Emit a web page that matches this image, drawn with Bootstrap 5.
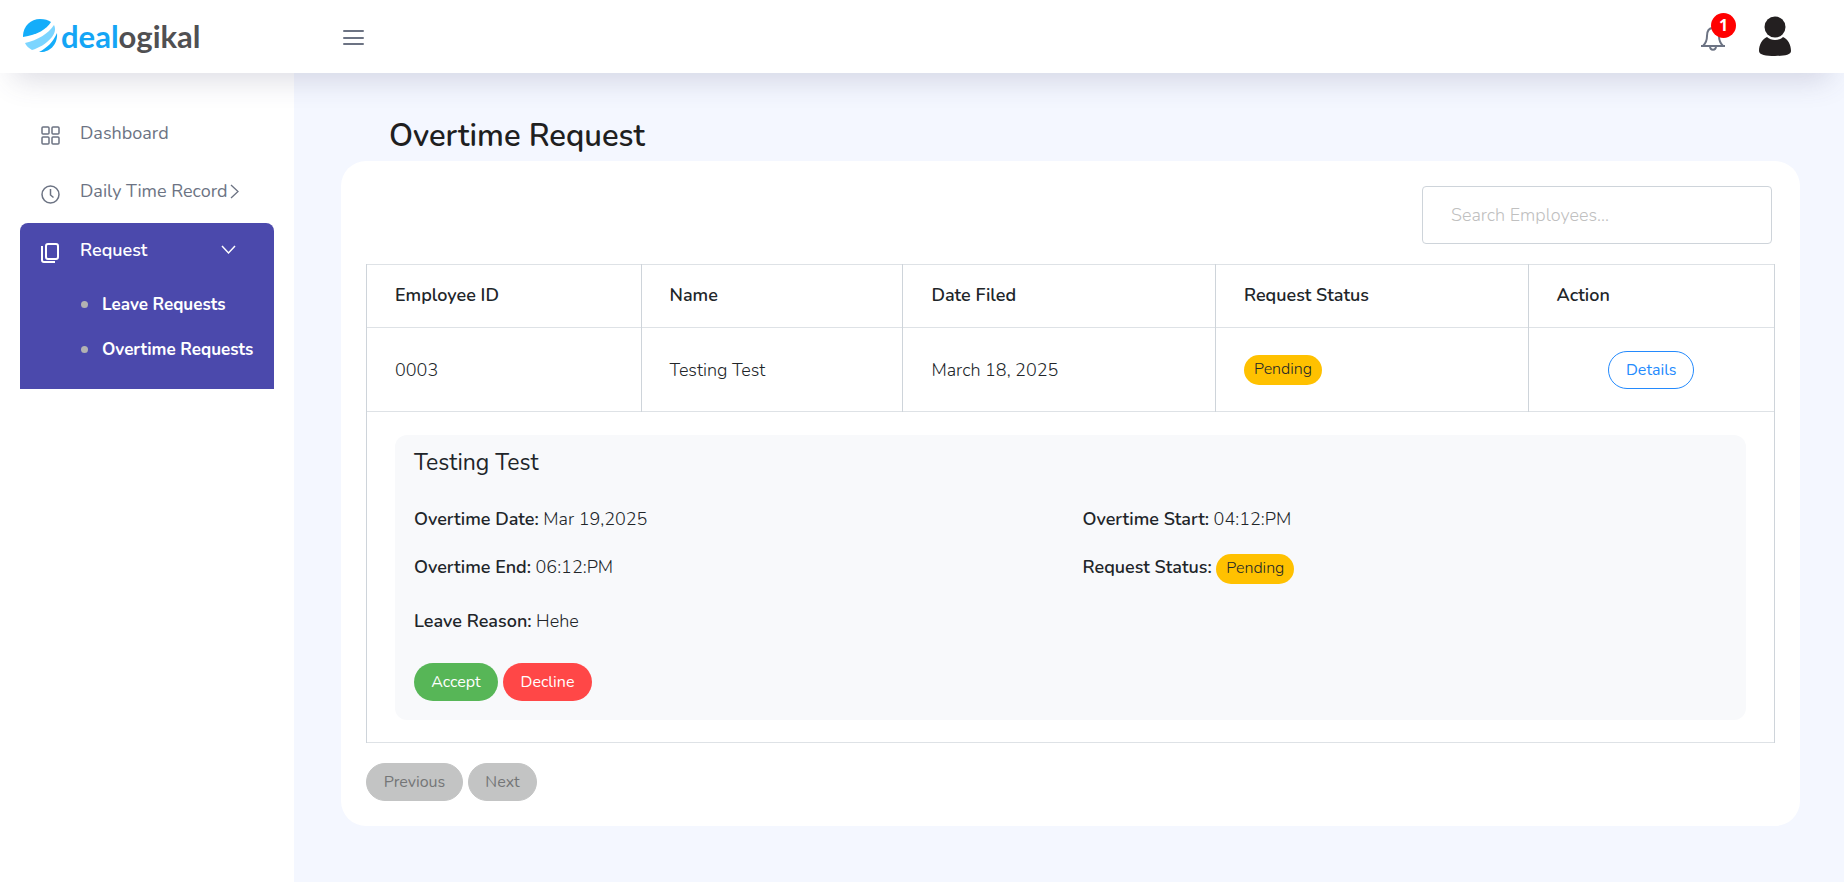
<!DOCTYPE html>
<html lang="en">
<head>
<meta charset="utf-8">
<meta name="viewport" content="width=device-width, initial-scale=1">
<title>Overtime Request</title>
<link href="https://cdn.jsdelivr.net/npm/bootstrap@5.3.0/dist/css/bootstrap.min.css" rel="stylesheet">
<style>
body{font-family:Nunito,Lato,sans-serif;font-size:18px;line-height:24px;font-weight:400;color:#212529;background:#f4f7ff;min-height:100vh}
.topbar{height:73px;box-shadow:0 20px 30px -14px rgba(70,70,110,.2);z-index:5}
.brand-area{width:294px;padding-left:23px}
.brand-word{font:700 31px/36px Lato,sans-serif;color:#505052;margin:0 0 2px 2px}
.brand-word span{color:#14a5f5}
.menu-toggle{margin:2px 0 0 48px}
.notice{width:26px;height:28px}
.notice svg{margin-top:2px}
.notice-count{width:25px;height:25px;left:11px;top:-10px;background:#f00;font:700 16px/25px "Open Sans",sans-serif}
.sidebar{width:294px;padding:31px 20px}
.sidebar a{color:#6c7383}
.side-link{height:58px;padding-left:21px;gap:19px}
.side-link svg{margin-top:6px}
.side-link .caret{margin-top:0}
.time-label{gap:2px}
.request-group{background:#4b49ac;border-radius:8px 8px 0 0;height:166px;margin-top:3px}
.request-group a{color:#fff;font-weight:600}
.request-group .side-link{height:54px}
.request-caret{margin-right:31px}
.sub-links{margin:5px 0 0;padding-left:61px}
.sub-links li{height:45px;gap:14px}
.sub-links li a{font-size:17px;font-weight:700}
.sub-links li::before{content:"";width:7px;height:7px;border-radius:50%;background:#b2b2b2}
.page-body{padding:41px 44px 57px 47px}
.page-heading{font-size:31px;line-height:44px;font-weight:600;color:#1f1f1f;margin:0 0 3px 48px}
.panel{background:#fff;border-radius:25px;padding:25px}
.search-box{width:350px;height:58px;padding:0 28px;border:1px solid #ced4da;border-radius:4px;font-size:18px;font-weight:300;margin:0 3px 20px 0}
.search-box::placeholder{color:#c0c0c0}
.requests{--bs-table-color:#212529;table-layout:fixed;margin-bottom:20px;font-weight:300}
.requests>:not(caption)>*>*{padding:0 28px;background:none;border-color:#ced4da}
.requests thead th{height:63px;padding-bottom:2px;font-weight:600;vertical-align:middle}
.requests .entry td{height:84px}
.requests .detail-cell{padding:23px 28px 22px}
.c-id{width:19.5%}.c-name{width:18.6%}.c-date,.c-status{width:22.2%}
.status-pill{display:inline-block;background:#ffc100;border-radius:15px;font-size:16px;font-weight:300;line-height:29px;height:30px;width:78px;text-align:center;color:#212529}
.detail-box{background:#f8f9fb;border-radius:12px;padding:14px 19px 19px}
.detail-box h2{font-size:23px;line-height:28px;font-weight:400;margin:0 0 27px}
.detail-box p{margin:0;line-height:30px}
.detail-box .row{row-gap:18px;margin-bottom:22px}
.detail-box strong{font-weight:600}
.detail-actions{margin-top:27px;gap:5px}
.pill{height:38px;border-radius:19px;padding:0 16px;font-size:16px;line-height:36px}
.pill-details{color:#248afd;border-color:#248afd;width:86px}
.pill-accept,.pill-accept:hover{background:#57b657;color:#fff;width:84px}
.pill-decline,.pill-decline:hover{background:#ff4747;color:#fff;width:89px}
.pager{gap:5px}
.pill-page:disabled{background:#c3c4c4;color:#747677;opacity:1;border-color:#c3c4c4}
.pill-prev{width:97px}.pill-next{width:69px}
</style>
</head>
<body class="d-flex flex-column">
<header class="topbar bg-white d-flex align-items-center position-relative">
  <a href="#" class="brand-area d-flex align-items-center text-decoration-none" aria-label="dealogikal">
    <svg width="36" height="38" viewBox="0 0 36 38"><path fill="#14adfa" d="M0 18C0 8 8 1 17 1c5 0 8 1 11 3-4 7-14 13-28 15z"/><path fill="#7cd5ff" d="M2 25C15 22 25 16 31 7c2 4 1 8-2 12-6 7-13 11-20 13-3-2-6-4-7-7z"/><path fill="#14adfa" d="M16 34c8-4 14-10 18-19 1 10-6 20-18 19z"/></svg>
    <span class="brand-word"><span>deal</span>ogikal</span>
  </a>
  <button class="menu-toggle btn p-0 border-0 d-flex" aria-label="Toggle menu"><svg width="23" height="18" fill="none" stroke="#6c7383" stroke-width="2" stroke-linecap="round"><path d="M2 2h19M2 9h19M2 15h19"/></svg></button>
  <div class="ms-auto d-flex align-items-center me-5">
    <button class="notice btn p-0 border-0 position-relative me-4" aria-label="Notifications">
      <svg class="d-block" width="26" height="28" viewBox="0 0 26 28" fill="none" stroke="#6c7383" stroke-width="2"><path d="M1 21h24M3 21c3-3 4-6 4-10 0-5 2-8 6-8s6 3 6 8c0 4 1 7 4 10M10 21c0 5 6 5 6 0"/></svg>
      <span class="notice-count position-absolute rounded-circle text-white text-center">1</span>
    </button>
    <button class="btn p-0 border-0 ms-2 me-1" aria-label="Account"><svg class="d-block" width="34" height="42" viewBox="0 0 34 42" fill="#231f20"><circle cx="17" cy="11" r="10.500"/><path d="M9 21c4 4 12 4 16 0 5 2 8 8 8 14 0 4-7 5-16 5S1 39 1 35c0-6 3-12 8-14z"/></svg></button>
  </div>
</header>
<div class="d-flex flex-grow-1">
  <nav class="sidebar bg-white flex-shrink-0" aria-label="Main">
    <a href="#" class="side-link d-flex align-items-center text-decoration-none">
      <svg width="20" height="20" fill="none" stroke="currentColor" stroke-width="1.500"><rect x="1" y="1" width="7" height="7" rx="1"/><rect x="11" y="1" width="7" height="7" rx="1"/><rect x="1" y="11" width="7" height="7" rx="1"/><rect x="11" y="11" width="7" height="7" rx="1"/></svg>Dashboard</a>
    <a href="#" class="side-link d-flex align-items-center text-decoration-none">
      <svg width="20" height="20" fill="none" stroke="currentColor" stroke-width="1.500"><circle cx="9.500" cy="10.500" r="8.500"/><path d="M9.500 5v6l3 2.500"/></svg>
      <span class="time-label d-flex align-items-center">Daily Time Record <svg class="caret" width="9" height="15" fill="none" stroke="currentColor" stroke-width="1.300"><path d="m1 1 7 6.500L1 14"/></svg></span></a>
    <div class="request-group">
      <a href="#" class="side-link d-flex align-items-center text-decoration-none">
        <svg width="20" height="22" fill="none" stroke="currentColor" stroke-width="2"><rect x="5" y="2" width="12" height="15" rx="2"/><path d="M1 4v14q0 2 2 2h11"/></svg>
        <span class="flex-grow-1">Request</span>
        <svg class="caret request-caret" width="22" height="10" fill="none" stroke="currentColor" stroke-width="1.500"><path d="m1 1 6.500 7L14 1"/></svg></a>
      <ul class="sub-links list-unstyled">
        <li class="d-flex align-items-center"><a href="#" class="text-decoration-none">Leave Requests</a></li>
        <li class="d-flex align-items-center"><a href="#" class="text-decoration-none text-nowrap">Overtime Requests</a></li>
      </ul>
    </div>
  </nav>
  <main class="page-body flex-grow-1">
    <h1 class="page-heading">Overtime Request</h1>
    <section class="panel">
      <div class="d-flex justify-content-end"><input type="search" class="search-box" placeholder="Search Employees..." aria-label="Search Employees"></div>
      <table class="table table-bordered requests align-middle">
        <colgroup><col class="c-id"><col class="c-name"><col class="c-date"><col class="c-status"><col></colgroup>
        <thead><tr><th scope="col">Employee ID</th><th scope="col">Name</th><th scope="col">Date Filed</th><th scope="col">Request Status</th><th scope="col">Action</th></tr></thead>
        <tbody>
          <tr class="entry"><td>0003</td><td>Testing Test</td><td>March 18, 2025</td><td><span class="status-pill">Pending</span></td><td class="text-center"><button class="btn pill pill-details">Details</button></td></tr>
          <tr><td colspan="5" class="detail-cell">
            <div class="detail-box">
              <h2>Testing Test</h2>
              <div class="row">
                <p class="col-6"><strong>Overtime Date:</strong> Mar 19,2025</p>
                <p class="col-6"><strong>Overtime Start:</strong> 04:12:PM</p>
                <p class="col-6"><strong>Overtime End:</strong> 06:12:PM</p>
                <p class="col-6"><strong>Request Status:</strong> <span class="status-pill">Pending</span></p>
              </div>
              <p><strong>Leave Reason:</strong> Hehe</p>
              <div class="detail-actions d-flex"><button class="btn pill pill-accept">Accept</button><button class="btn pill pill-decline">Decline</button></div>
            </div>
          </td></tr>
        </tbody>
      </table>
      <div class="pager d-flex"><button class="btn pill pill-page pill-prev" disabled>Previous</button><button class="btn pill pill-page pill-next" disabled>Next</button></div>
    </section>
  </main>
</div>
<script src="https://cdn.jsdelivr.net/npm/bootstrap@5.3.0/dist/js/bootstrap.bundle.min.js"></script>
</body>
</html>
